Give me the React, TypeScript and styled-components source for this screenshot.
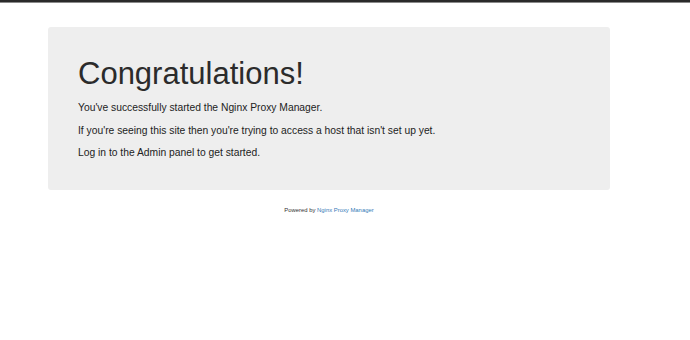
import React from "react";
import styled, { createGlobalStyle } from "styled-components";

const GlobalStyle = createGlobalStyle`
  html, body {
    margin: 0;
    padding: 0;
    background: #ffffff;
    font-family: "Liberation Sans", Arial, sans-serif;
    color: #333333;
  }
`;

const TopBar = styled.div`
  height: 2px;
  background: #2a2a2a;
  border-bottom: 1px solid #8a8a8a;
`;

const Container = styled.div`
  width: 562px;
  margin-left: 48px;
  padding-top: 24px;
`;

const Jumbotron = styled.div`
  background: #eeeeee;
  border-radius: 3px;
  padding: 30px 30px 22px;
`;

const Heading = styled.h1`
  margin: 0 0 9px;
  font-size: 31px;
  line-height: 34px;
  font-weight: 400;
  color: #2b2b2b;
`;

const Para = styled.p`
  margin: 0 0 7.5px;
  font-size: 10.3px;
  line-height: 15px;
  color: #222222;
`;

const Footer = styled.div`
  text-align: center;
  margin-top: 16px;
  font-size: 5.9px;
  line-height: 9px;
  color: #333333;
`;

const Link = styled.a`
  color: #337ab7;
  text-decoration: none;
`;

export default function App() {
  return (
    <>
      <GlobalStyle />
      <TopBar />
      <Container>
        <Jumbotron>
          <Heading>Congratulations!</Heading>
          <Para>You've successfully started the Nginx Proxy Manager.</Para>
          <Para>If you're seeing this site then you're trying to access a host that isn't set up yet.</Para>
          <Para>Log in to the Admin panel to get started.</Para>
        </Jumbotron>
        <Footer>
          Powered by <Link href="#">Nginx Proxy Manager</Link>
        </Footer>
      </Container>
    </>
  );
}
